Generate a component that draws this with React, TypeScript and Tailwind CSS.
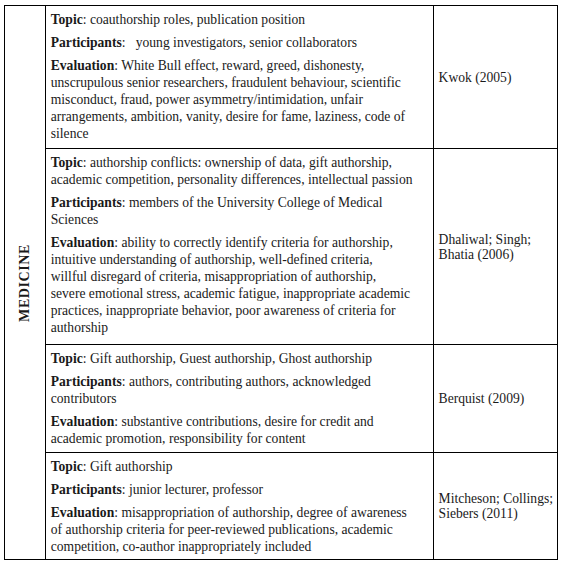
import React from 'react';

interface Entry {
  topic: string[];
  participants: string[];
  evaluation: string[];
  source: string[];
  height: string;
}

const entries: Entry[] = [
  {
    topic: ['coauthorship roles, publication position'],
    participants: ['\u00a0 young investigators, senior collaborators'],
    evaluation: [
      'White Bull effect, reward, greed, dishonesty,',
      'unscrupulous senior researchers, fraudulent behaviour, scientific',
      'misconduct, fraud, power asymmetry/intimidation, unfair',
      'arrangements, ambition, vanity, desire for fame, laziness, code of',
      'silence',
    ],
    source: ['Kwok (2005)'],
    height: 'h-[143px]',
  },
  {
    topic: [
      'authorship conflicts: ownership of data, gift authorship,',
      'academic competition, personality differences, intellectual passion',
    ],
    participants: ['members of the University College of Medical', 'Sciences'],
    evaluation: [
      'ability to correctly identify criteria for authorship,',
      'intuitive understanding of authorship, well-defined criteria,',
      'willful disregard of criteria, misappropriation of authorship,',
      'severe emotional stress, academic fatigue, inappropriate academic',
      'practices, inappropriate behavior, poor awareness of criteria for',
      'authorship',
    ],
    source: ['Dhaliwal; Singh;', 'Bhatia (2006)'],
    height: 'h-[196px]',
  },
  {
    topic: ['Gift authorship, Guest authorship, Ghost authorship'],
    participants: ['authors, contributing authors, acknowledged', 'contributors'],
    evaluation: [
      'substantive contributions, desire for credit and',
      'academic promotion, responsibility for content',
    ],
    source: ['Berquist (2009)'],
    height: 'h-[108px]',
  },
  {
    topic: ['Gift authorship'],
    participants: ['junior lecturer, professor'],
    evaluation: [
      'misappropriation of authorship, degree of awareness',
      'of authorship criteria for peer-reviewed publications, academic',
      'competition, co-author inappropriately included',
    ],
    source: ['Mitcheson; Collings;', 'Siebers (2011)'],
    height: 'h-[97px]',
  },
];

const Lines: React.FC<{ lines: string[] }> = ({ lines }) => (
  <>
    {lines.map((l, i) => (
      <React.Fragment key={i}>
        {i > 0 && <br />}
        {l}
      </React.Fragment>
    ))}
  </>
);

const Field: React.FC<{ label: string; lines: string[]; last?: boolean }> = ({ label, lines, last }) => (
  <p className={`whitespace-nowrap ${last ? '' : 'mb-[6px]'}`}>
    <span className="font-bold">{label}</span>: <Lines lines={lines} />
  </p>
);

export default function App() {
  return (
    <div className="w-[563px] h-[566px] bg-white pt-[5px] pl-[4px] font-['Liberation_Serif','Times_New_Roman',serif] text-[#1a1a1a]">
      <table className="border-collapse w-[554px] font-['Liberation_Serif','Times_New_Roman',serif] text-[13.6px] leading-[17px]">
        <tbody>
          {entries.map((e, i) => (
            <tr key={i} className={e.height}>
              {i === 0 && (
                <td rowSpan={4} className="w-[41px] border border-black align-middle p-0">
                  <div className="flex justify-center items-center">
                    <span className="font-bold text-[14px] tracking-[0.6px] [writing-mode:vertical-rl] rotate-180">
                      MEDICINE
                    </span>
                  </div>
                </td>
              )}
              <td className="w-[388px] border border-black align-top pl-[5px] pr-1 pt-[5px] pb-1">
                <Field label="Topic" lines={e.topic} />
                <Field label="Participants" lines={e.participants} />
                <Field label="Evaluation" lines={e.evaluation} last />
              </td>
              <td className="border border-black align-middle pl-[5px] pr-1">
                <p className="whitespace-nowrap leading-[15px]">
                  <Lines lines={e.source} />
                </p>
              </td>
            </tr>
          ))}
        </tbody>
      </table>
    </div>
  );
}
